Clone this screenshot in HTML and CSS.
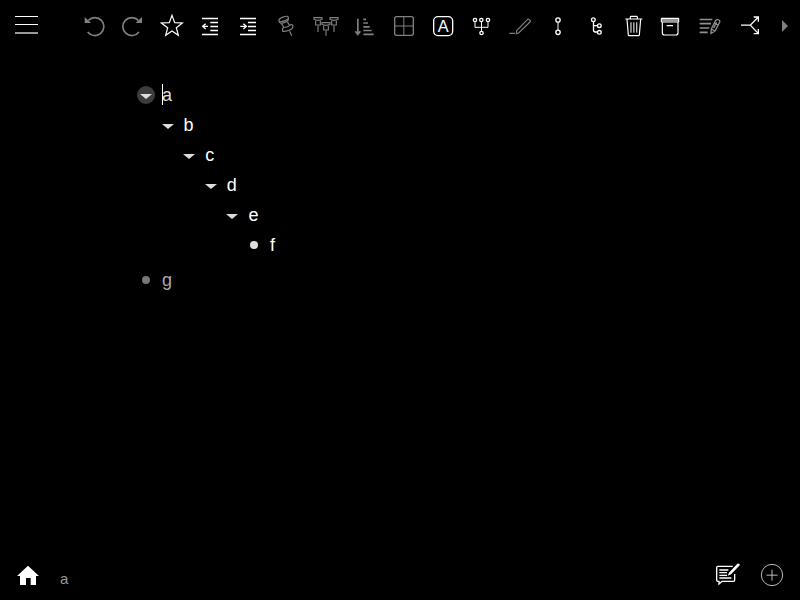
FILE: index.html
```
<!DOCTYPE html>
<html lang="en">
<head>
<meta charset="utf-8">
<meta name="viewport" content="width=device-width, initial-scale=1">
<title>a</title>
<link rel="stylesheet" href="styles.css">
</head>
<body>
<header class="topbar">
  <button class="menu" aria-label="Menu"><span class="bar"></span><span class="bar"></span><span class="bar last"></span></button>
  <div class="toolbar" role="toolbar">
    <button class="tool dim" aria-label="Undo"><svg class="icon" viewBox="238 33 90 90"><path d="M266 61A27 27 0 1 1 264 96" stroke-width="5"/><path class="solid" d="M255 51V69H274Z"/></svg></button>
    <button class="tool dim" aria-label="Redo"><svg class="icon" viewBox="354 33 90 90"><path d="M415 61A27 27 0 1 0 417 96" stroke-width="5"/><path class="solid" d="M426 51V69H407Z"/></svg></button>
    <button class="tool" aria-label="Favorite"><svg class="icon" viewBox="18 18 90 90"><path d="M66 31L74 53L97 54L79 68L85 91L66 78L47 91L53 68L34 54L58 53Z" stroke-width="3.600"/></svg></button>
    <button class="tool" aria-label="Outdent"><svg class="icon" viewBox="135 18 90 90"><path d="M156 40.500H204M181 52.500H204M181 64.500H204M181 76.500H204M156 88.500H204M158 64H174M167 56L158 64L167 72" stroke-width="4"/></svg></button>
    <button class="tool" aria-label="Indent"><svg class="icon" viewBox="252 18 90 90"><path d="M270 40.500H318M294 52.500H318M294 64.500H318M294 76.500H318M270 88.500H318M271 64H288M280 56L289 64L280 72" stroke-width="4"/></svg></button>
    <button class="tool dim" aria-label="Pin"><svg class="icon" viewBox="21 18 90 90"><g stroke-width="3.500"><ellipse cx="56" cy="42" rx="15" ry="6" transform="rotate(-20 56 42)"/><path d="M42 48Q43 54 49 55Q61 54 70 45L70 38M49 55L56 66M66 49L74 61M56 66Q50 73 53 79Q67 81 81 71Q86 64 83 60Q79 57 74 61Q66 69 56 66M74 79L80 92"/></g></svg></button>
    <button class="tool dim" aria-label="Pin all"><svg class="icon" viewBox="138 18 90 90"><g stroke-width="3.500"><path d="M147 38H171V43Q159 49 147 43ZM152 47V60H166V47M151 60H167M159 62V81"/><path d="M195 38H219V43Q207 49 195 43ZM200 47V60H214V47M199 60H215M207 62V81"/><path d="M171 53H195V58Q183 64 171 58ZM176 62V75H190V62M175 75H191M183 77V92"/></g></svg></button>
    <button class="tool dim" aria-label="Sort"><svg class="icon" viewBox="254 18 90 90"><path d="M280.500 41V87M273 79L280.500 88L288 79" stroke-width="5"/><path d="M297 43H305M297 54H311M297 65.500H316M297 76.500H322M297 88H328" stroke-width="5"/></svg></button>
    <button class="tool dim" aria-label="Table"><svg class="icon" viewBox="24 18 90 90"><rect x="44" y="35" width="56" height="56" rx="6" stroke-width="4"/><path d="M71.500 35V91M44 63H100" stroke-width="3"/></svg></button>
    <button class="tool" aria-label="Text style"><svg class="icon" viewBox="138 18 90 90"><rect x="161" y="35" width="57" height="57" rx="13" stroke-width="4"/><text x="189.500" y="80" class="letter">A</text></svg></button>
    <button class="tool" aria-label="Merge branches"><svg class="icon" viewBox="255 18 90 90"><g stroke-width="4"><circle cx="285" cy="45" r="5"/><circle cx="304" cy="45" r="5"/><circle cx="324" cy="45" r="5"/><circle cx="304.500" cy="84" r="5"/><path d="M285 50V67H324V50M304.500 50V79" stroke-width="3"/></g></svg></button>
    <button class="tool dim" aria-label="Edit note"><svg class="icon" viewBox="9 18 90 90"><path d="M50 77L83 43Q86 41 91 47Q92 49 90 51L56 84L49 86ZM28 85H45" stroke-width="3.500"/></svg></button>
    <button class="tool" aria-label="Connect"><svg class="icon" viewBox="126 18 90 90"><circle cx="174" cy="45" r="6.500" stroke-width="4"/><circle cx="174" cy="82" r="6.500" stroke-width="4"/><path d="M174 52V75" stroke-width="4" opacity=".75"/></svg></button>
    <button class="tool" aria-label="Subtree"><svg class="icon" viewBox="243 18 90 90"><g stroke-width="4"><circle cx="280" cy="44" r="5.500"/><circle cx="298" cy="62" r="5.500"/><circle cx="298" cy="82" r="5.500"/><path d="M280.500 50V75Q280.500 81 286 81H292M281 62H292"/></g></svg></button>
    <button class="tool" aria-label="Delete"><svg class="icon" viewBox="28 18 90 90"><path d="M47 42H98M62 41V36Q62 34 65 34H80Q83 34 83 36V41M52 43L56 90Q56 92 59 92H86Q89 92 89 90L93 43" stroke-width="3.500"/><path d="M64 52V83M72.500 52V83M81 52V83" stroke-width="4" opacity=".75"/></svg></button>
    <button class="tool" aria-label="Archive"><svg class="icon" viewBox="144 18 90 90"><rect x="154" y="40" width="52" height="11" rx="2" stroke-width="3.500"/><path d="M156 45.500H204" stroke-width="7" opacity=".6"/><path d="M157 51V83Q157 90 164 90H197Q204 90 204 83V51M170 62H189" stroke-width="3.500"/></svg></button>
    <button class="tool mid" aria-label="Edit text"><svg class="icon" viewBox="258 18 90 90"><path d="M269 43.500H307M269 56H303M269 69H298M269 82H293" stroke-width="5"/><path d="M304 72L317 46Q320 42 327 45Q331 47 329 52L315 78L303 85ZM312 54L324 60M304 72L315 78M311 69L320 52" stroke-width="4"/></svg></button>
    <button class="tool" aria-label="Split"><svg class="icon" viewBox="45 18 90 90"><path d="M63 60.500H91L115 36M91 60.500L115 86M101 36H115V50M115 72V86H101" stroke-width="4"/></svg></button>
  </div>
  <button class="more" aria-label="More tools"></button>
</header>

<main class="outline">
  <ul class="thoughts root">
    <li>
      <div class="thought active"><button class="toggle" aria-label="Collapse a"></button><span class="value caret">a</span></div>
      <ul class="thoughts">
        <li>
          <div class="thought"><button class="toggle" aria-label="Collapse b"></button><span class="value">b</span></div>
          <ul class="thoughts">
            <li>
              <div class="thought"><button class="toggle" aria-label="Collapse c"></button><span class="value">c</span></div>
              <ul class="thoughts">
                <li>
                  <div class="thought"><button class="toggle" aria-label="Collapse d"></button><span class="value">d</span></div>
                  <ul class="thoughts">
                    <li>
                      <div class="thought"><button class="toggle" aria-label="Collapse e"></button><span class="value">e</span></div>
                      <ul class="thoughts">
                        <li><div class="thought"><span class="bullet"></span><span class="value">f</span></div></li>
                      </ul>
                    </li>
                  </ul>
                </li>
              </ul>
            </li>
          </ul>
        </li>
      </ul>
    </li>
    <li class="faded"><div class="thought"><span class="bullet"></span><span class="value">g</span></div></li>
  </ul>
</main>

<footer class="navbar">
  <a class="home" href="#" aria-label="Home"><svg class="home-icon" viewBox="51 30 66 63"><path class="solid" d="M84 32L117 63H108V90H92V69H78V90H60V63H51Z"/></svg></a>
  <a class="crumb" href="#">a</a>
  <div class="actions">
    <button class="action" aria-label="Add note"><svg class="action-icon" viewBox="48 33 78 72"><path d="M101 46H57Q53 46 53 50V87Q53 91 57 91H60V99L69 91H103Q107 91 107 87V69" stroke-width="4"/><path d="M61 57H88M61 65H84M61 73H84M61 81H97" stroke-width="4"/><path class="solid" d="M86 74L90 65L115 38Q118 36 121 39Q124 41 121 44L96 70Z"/></svg></button>
    <button class="action" aria-label="New thought"><svg class="action-icon soft" viewBox="177 33 78 72"><circle cx="216" cy="72" r="32" stroke-width="3"/><path d="M216 56V89M199.500 72.500H232.500" stroke-width="3"/></svg></button>
  </div>
</footer>
</body>
</html>
```
FILE: styles.css
```
* { box-sizing: border-box; }

body {
  margin: 0;
  min-height: 100vh;
  display: flex;
  flex-direction: column;
  background: #000;
  color: #fff;
  font: 18px/30px "Liberation Sans", Helvetica, Arial, sans-serif;
}

button {
  margin: 0;
  padding: 0;
  border: 0;
  background: none;
  color: inherit;
  font: inherit;
  cursor: pointer;
}

a { color: inherit; text-decoration: none; }

svg {
  display: block;
  fill: none;
  stroke: currentColor;
}

.solid { fill: currentColor; stroke: none; }

.topbar {
  display: flex;
  align-items: center;
  height: 52px;
  padding: 0 12px 0 15px;
}

.menu {
  display: flex;
  flex-direction: column;
  gap: 7px;
  width: 23px;
  margin-right: 37px;
  padding-bottom: 2px;
}

.bar { height: 1px; background: #fff; }
.bar.last { height: 2px; background: #999; }

.toolbar { flex: 1; display: flex; margin-right: 13px; }

.tool {
  flex: 1;
  min-width: 0;
  display: flex;
  justify-content: center;
}

.icon { width: 30px; height: 30px; flex: none; }
.dim { color: #808080; }
.mid { color: #909090; }

.letter {
  font: 49px "Liberation Sans", Helvetica, Arial, sans-serif;
  text-anchor: middle;
  fill: currentColor;
  stroke: none;
}

.more {
  border: solid transparent;
  border-width: 6px 0 6px 6px;
  border-left-color: #808080;
}

.outline { flex: 1; padding: 28px 20px 0 136px; }

.thoughts { margin: 0; padding: 0 0 0 1.2em; list-style: none; }
.root { padding: 0; }

.thought { display: flex; align-items: center; gap: 6px; height: 30px; }

.toggle,
.bullet {
  flex: none;
  display: flex;
  align-items: center;
  justify-content: center;
  width: 20px;
  height: 20px;
}

.toggle::before {
  content: "";
  margin-top: 2px;
  border: solid transparent;
  border-width: 5px 6px 0;
  border-top-color: #ddd;
}

.bullet::before {
  content: "";
  width: 8px;
  height: 8px;
  border-radius: 50%;
  background: #ddd;
}

.active .toggle {
  width: 18px;
  height: 18px;
  margin: 0 1px;
  border-radius: 50%;
  background: #3c3c3c;
}

.active { color: #ddd; }

.caret { position: relative; }
.caret::before {
  content: "";
  position: absolute;
  left: 0;
  top: 4px;
  width: 1px;
  height: 21px;
  background: #fff;
}

.faded { margin-top: 5px; color: #aaa; }
.faded .bullet::before { background: #777; }

.navbar {
  display: flex;
  align-items: center;
  height: 52px;
  padding: 0 15px 0 17px;
}

.home-icon { width: 22px; height: 21px; margin-top: 2px; }
.crumb { margin: 10px 0 0 21px; color: #999; font-size: 15px; }

.actions { display: flex; gap: 18px; margin-left: auto; }
.action-icon { width: 26px; height: 24px; }
.soft { color: #bbb; }
```
